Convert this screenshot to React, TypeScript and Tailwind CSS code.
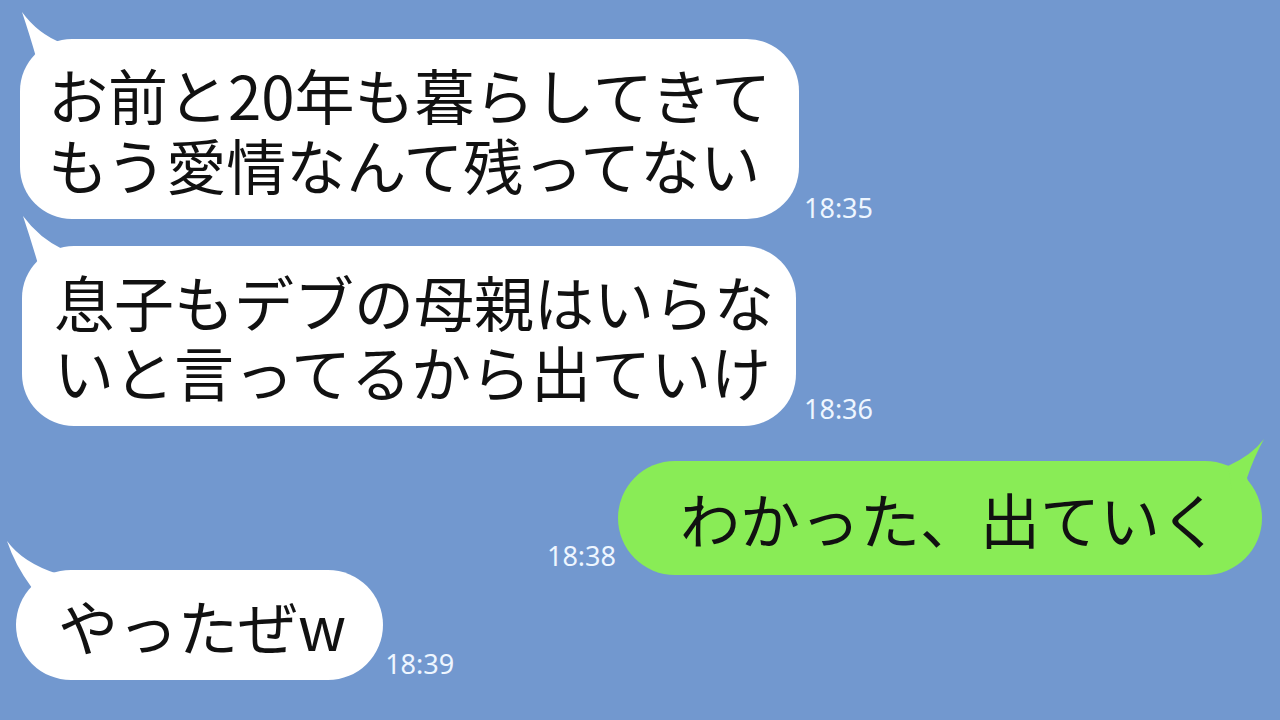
import React from 'react';

const jp = { fontFamily: '"Noto Sans CJK JP", "Noto Sans", sans-serif' };
const num = { fontFamily: '"Noto Sans", "Liberation Sans", sans-serif' };

function LeftTail({ tip }: { tip: [number, number] }) {
  // svg placed so that bubble's top-left corner is at (30, 40)
  const [tx, ty] = tip;
  const x = tx + 30;
  const y = ty + 40;
  return (
    <svg className="absolute left-[-30px] top-[-40px]" width="100" height="100" viewBox="0 0 100 100">
      <path d={`M${x} ${y} Q${x + 16} ${y + 22} 72 44 L72 84 L48 84 L46 58 Q${x + 8} ${y + 24} ${x} ${y} Z`} fill="#ffffff" />
    </svg>
  );
}

function Time({ t, className }: { t: string; className?: string }) {
  return (
    <span style={num} className={'text-[27px] leading-none text-[#eef6ff] whitespace-nowrap ' + (className || '')}>
      {t}
    </span>
  );
}

export default function App() {
  return (
    <div className="w-[1280px] h-[720px] overflow-hidden bg-[#7298cf] flex flex-col pt-[39px]" style={jp}>
      {/* message 1 */}
      <div className="flex items-end gap-[5px] pl-[20px]">
        <div className="relative bg-white rounded-[52px] pl-[28px] pr-[28px] py-[20px] text-[60px] leading-[70px] text-[#111111]">
          <LeftTail tip={[2, -27]} />
          <div className="relative">お前と20年も暮らしてきて</div>
          <div className="relative">もう愛情なんて残ってない</div>
        </div>
        <Time t="18:35" className="mb-[-2px]" />
      </div>

      {/* message 2 */}
      <div className="flex items-end gap-[8px] pl-[22px] mt-[27px]">
        <div className="relative bg-white rounded-[52px] pl-[32px] pr-[22px] py-[20px] text-[60px] leading-[70px] text-[#111111]">
          <LeftTail tip={[1, -30]} />
          <div className="relative">息子もデブの母親はいらな</div>
          <div className="relative">いと言ってるから出ていけ</div>
        </div>
        <Time t="18:36" className="mb-[4px]" />
      </div>

      {/* message 3 (mine) */}
      <div className="flex items-end justify-end gap-[2px] pr-[18px] mt-[35px]">
        <Time t="18:38" className="mb-[6px]" />
        <div className="relative bg-[#89ec56] rounded-full pl-[62px] pr-[42px] py-[22px] text-[60px] leading-[70px] text-[#111111]">
          <svg className="absolute right-[-20px] top-[-40px]" width="60" height="80" viewBox="0 0 60 80">
            <path d="M42 18 Q30 34 6 45 L10 70 L30 70 L25 57 Q32 36 42 18 Z" fill="#89ec56" />
          </svg>
          <div className="relative">わかった、出ていく</div>
        </div>
      </div>

      {/* message 4 */}
      <div className="flex items-end gap-[2px] pl-[16px] mt-[-5px]">
        <div className="relative bg-white rounded-full pl-[42px] pr-[37px] py-[20px] text-[60px] leading-[70px] text-[#111111]">
          <LeftTail tip={[-9, -29]} />
          <div className="relative">やったぜw</div>
        </div>
        <Time t="18:39" className="mb-[3px]" />
      </div>
    </div>
  );
}
